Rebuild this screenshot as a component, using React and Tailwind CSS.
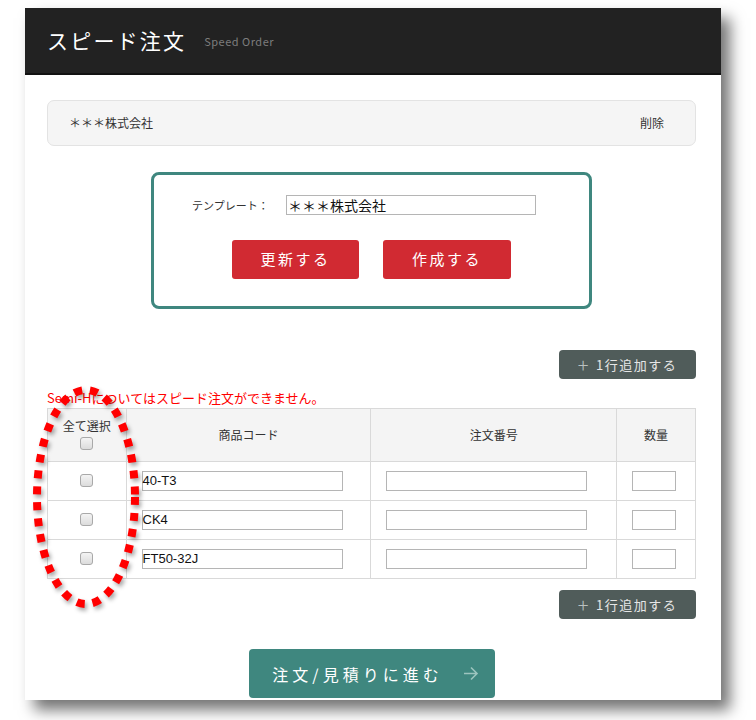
import { useState } from 'react';

const jp = { fontFamily: '"Noto Sans CJK JP", "Noto Sans", sans-serif' };

function Check() {
  return <span className="inline-block w-[13px] h-[13px] rounded-[3px] border border-[#a9a9a9] bg-gradient-to-b from-[#f4f4f4] to-[#dcdcdc]" />;
}

function AddRowButton() {
  return (
    <div className="flex justify-end">
      <button className="w-[137px] h-[29px] rounded-[4px] bg-[#505c5a] text-[#e6e6e6] text-[13px] tracking-[1.5px] flex items-center justify-center gap-[6px]">
        <span className="text-[#b9c0bf] text-[20px] leading-none font-light">+</span>
        <span>1行追加する</span>
      </button>
    </div>
  );
}

export default function App() {
  const [rows] = useState(['40-T3', 'CK4', 'FT50-32J']);

  return (
    <div className="relative w-[756px] h-[720px] bg-white overflow-hidden pt-[8px] pl-[25px]" style={jp}>
      <div className="w-[696px] h-[692px] bg-white shadow-[9px_10px_14px_rgba(0,0,0,0.55)] overflow-hidden">
        <header className="h-[67px] bg-[#222222] border-b-2 border-[#121212] flex items-center pl-[22px] gap-[18px]">
          <h1 className="text-white text-[21px] tracking-[2.2px] font-normal">スピード注文</h1>
          <span className="text-[#7d7d7d] text-[11px] tracking-[0.5px] mt-[2px]">Speed Order</span>
        </header>

        <div className="ml-[22px] w-[649px]">
          <div className="mt-[25px] h-[46px] rounded-[7px] border border-[#e3e3e3] bg-[#f5f5f5] flex items-center justify-between pl-[21px] pr-[31px] text-[12px] text-[#333]">
            <span>＊＊＊株式会社</span>
            <span>削除</span>
          </div>

          <div className="mx-auto mt-[26px] w-[441px] h-[137px] rounded-[8px] border-[3px] border-[#3f877f] pt-[20px]">
            <div className="flex items-center">
              <span className="ml-[38px] w-[94px] text-[11px] text-[#333]">テンプレート：</span>
              <div className="w-[250px] h-[20px] border border-[#b5b5b5] text-[14px] text-[#111] leading-[18px] pl-[1px]">＊＊＊株式会社</div>
            </div>
            <div className="mt-[25px] flex justify-center gap-[24px]">
              <button className="w-[127px] h-[39px] rounded-[3px] bg-[#d12a32] text-white text-[15px] tracking-[2.5px]">更新する</button>
              <button className="w-[128px] h-[39px] rounded-[3px] bg-[#d12a32] text-white text-[15px] tracking-[2.5px]">作成する</button>
            </div>
          </div>

          <div className="mt-[41px]">
            <AddRowButton />
          </div>

          <p className="mt-[9px] text-[13px] leading-[20px] text-[#ff0000]">Semi-Hについてはスピード注文ができません。</p>

          <table className="w-[649px] border-collapse text-[12px] text-[#333]">
            <thead>
              <tr className="bg-[#f4f4f4] h-[53px]">
                <th className="w-[79px] border border-[#d9d9d9] font-normal align-top pt-[8px]">
                  <div>全て選択</div>
                  <div className="mt-[2px] leading-none"><Check /></div>
                </th>
                <th className="w-[245px] border border-[#d9d9d9] font-normal">商品コード</th>
                <th className="w-[246px] border border-[#d9d9d9] font-normal">注文番号</th>
                <th className="w-[79px] border border-[#d9d9d9] font-normal">数量</th>
              </tr>
            </thead>
            <tbody>
              {rows.map((code) => (
                <tr key={code} className="h-[39px]">
                  <td className="border border-[#d9d9d9] text-center leading-none"><Check /></td>
                  <td className="border border-[#d9d9d9] pl-[15px]">
                    <div className="w-[201px] h-[20px] border border-[#b5b5b5] text-[13px] leading-[18px] text-[#111]" style={{ fontFamily: '"Liberation Sans", sans-serif' }}>{code}</div>
                  </td>
                  <td className="border border-[#d9d9d9] pl-[15px]">
                    <div className="w-[201px] h-[20px] border border-[#b5b5b5]" />
                  </td>
                  <td className="border border-[#d9d9d9] pl-[15px]">
                    <div className="w-[44px] h-[20px] border border-[#b5b5b5]" />
                  </td>
                </tr>
              ))}
            </tbody>
          </table>

          <div className="mt-[11px]">
            <AddRowButton />
          </div>

          <div className="mt-[30px] flex justify-center">
            <button className="relative w-[246px] h-[49px] rounded-[4px] bg-[#3f877f] text-white text-[16px] tracking-[4px] pr-[28px]">
              注文/見積りに進む
              <svg className="absolute right-[16px] top-[17px]" width="16" height="15" viewBox="0 0 16 15" fill="none" stroke="#9cc4be" strokeWidth="1.6">
                <path d="M1 7.5h13M8 1.5l6 6-6 6" />
              </svg>
            </button>
          </div>
        </div>
      </div>

      <svg className="absolute left-0 top-0 pointer-events-none" width="756" height="720" style={{ filter: 'drop-shadow(2px 3px 2px rgba(0,0,0,0.35))' }}>
        <ellipse cx="86" cy="497" rx="49" ry="107" fill="none" stroke="#ff0000" strokeWidth="8" strokeDasharray="8 8" />
      </svg>
    </div>
  );
}
